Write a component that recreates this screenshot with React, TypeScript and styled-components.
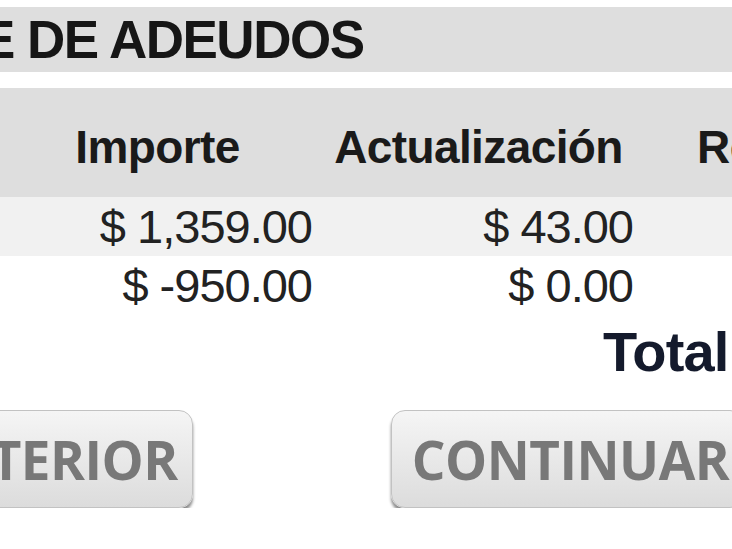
import React from 'react';
import styled, { createGlobalStyle } from 'styled-components';

const GlobalStyle = createGlobalStyle`
	html, body {
		margin: 0;
		padding: 0;
		background: #fff;
		overflow: hidden;
	}
	body {
		font-family: "Liberation Sans", Arial, sans-serif;
		color: #1c1c1c;
	}
`;

const Page = styled.div`
	width: 1000px;
	padding-top: 7px;
`;

const TitleBar = styled.div`
	height: 65px;
	background: #dedede;
	display: flex;
	align-items: center;
	overflow: hidden;
`;

const Title = styled.h1`
	margin: 0 0 0 -20px;
	font-size: 53px;
	font-weight: bold;
	letter-spacing: -1.5px;
	line-height: 1;
	color: #161616;
	white-space: nowrap;
`;

const Table = styled.div`
	margin-top: 16px;
`;

const Row = styled.div<{ $bg?: string; $h: number }>`
	display: grid;
	grid-template-columns: 321px 321px 321px;
	margin-left: -3px;
	height: ${(p) => p.$h}px;
	align-items: center;
	background: ${(p) => p.$bg ?? 'transparent'};
`;

const HeadCell = styled.div`
	text-align: center;
	font-size: 46px;
	font-weight: bold;
	letter-spacing: -0.6px;
	white-space: nowrap;
	color: #1a1a1a;
	padding-top: 8px;
`;

const Cell = styled.div`
	text-align: right;
	padding-right: 6px;
	font-size: 47px;
	letter-spacing: -1px;
	white-space: nowrap;
	color: #222;
`;

const TotalRow = styled.div`
	height: 72px;
	display: flex;
	align-items: center;
	padding-left: 603px;
`;

const TotalLabel = styled.span`
	font-size: 56px;
	font-weight: bold;
	letter-spacing: -0.8px;
	color: #141a2c;
	white-space: nowrap;
`;

const Buttons = styled.div`
	margin-top: 23px;
	display: flex;
	gap: 198px;
	margin-left: -109px;
`;

const Button = styled.button`
	height: 98px;
	padding: 0 14px 0 20px;
	border-radius: 14px;
	border: 1px solid #c2c2c2;
	background: linear-gradient(#f5f5f5, #dcdcdc);
	box-shadow: 0 4px 3px rgba(0, 0, 0, 0.45);
	color: #787878;
	font-family: "Open Sans", "Liberation Sans", sans-serif;
	font-size: 53px;
	font-weight: bold;
	letter-spacing: -0.5px;
	white-space: nowrap;
	cursor: pointer;
`;

const rows = [
	{ importe: '$ 1,359.00', act: '$ 43.00', bg: '#f1f1f1' },
	{ importe: '$ -950.00', act: '$ 0.00', bg: '#ffffff' },
];

export default function App() {
	return (
		<Page>
			<GlobalStyle />
			<TitleBar>
				<Title>E DE ADEUDOS</Title>
			</TitleBar>
			<Table>
				<Row $h={109} $bg="#dedede">
					<HeadCell>Importe</HeadCell>
					<HeadCell>Actualización</HeadCell>
					<HeadCell>Recargos</HeadCell>
				</Row>
				{rows.map((r) => (
					<Row key={r.importe} $h={59} $bg={r.bg}>
						<Cell>{r.importe}</Cell>
						<Cell>{r.act}</Cell>
						<Cell />
					</Row>
				))}
			</Table>
			<TotalRow>
				<TotalLabel>Total</TotalLabel>
			</TotalRow>
			<Buttons>
				<Button>ANTERIOR</Button>
				<Button>CONTINUAR</Button>
			</Buttons>
		</Page>
	);
}
